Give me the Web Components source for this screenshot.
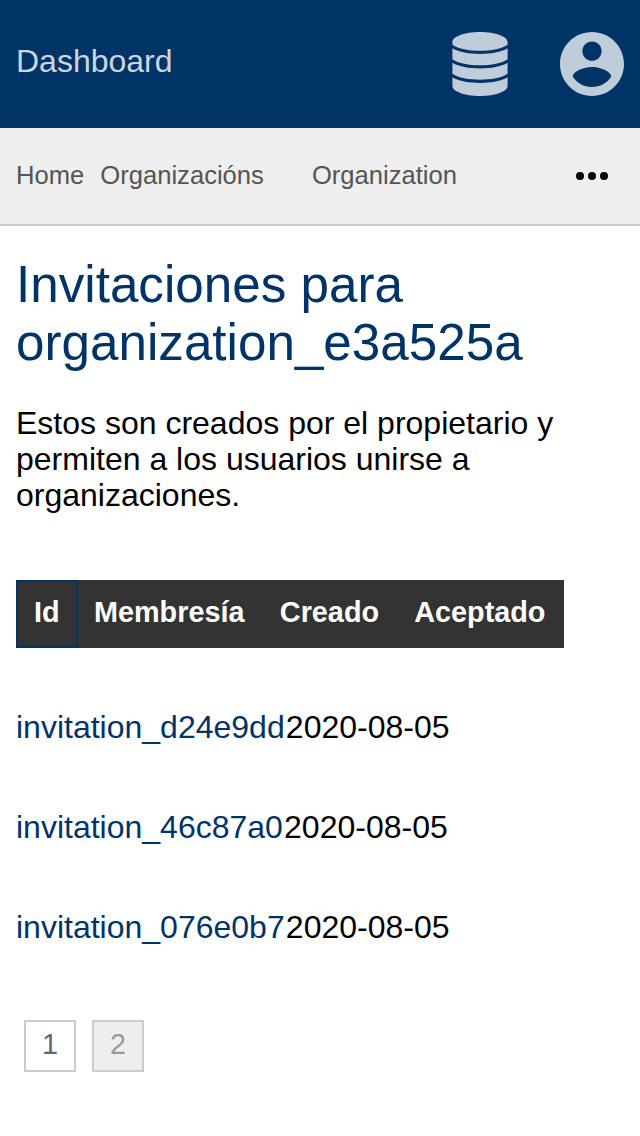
<!DOCTYPE html>
<html lang="es">
<head>
<meta charset="utf-8">
<title>Invitaciones</title>
<style>
body { margin: 0; background: #fff; color: #000; font: 32px/36px "Liberation Sans", Arial, sans-serif; }
</style>
</head>
<body>
<invite-page></invite-page>
<script>
const define = (name, html) => {
  const t = document.createElement('template');
  t.innerHTML = html;
  customElements.define(name, class extends HTMLElement {
    constructor() {
      super();
      this.attachShadow({ mode: 'open' }).append(t.content.cloneNode(true));
    }
  });
};

define('app-header', `
<style>
:host { display: flex; box-sizing: border-box; height: 128px; padding: 0 16px; background: #036; align-items: flex-start; justify-content: space-between; }
.title { margin-top: 43px; color: #ccd6e0; }
nav { display: flex; gap: 52px; margin-top: 32px; }
svg { display: block; height: 64px; fill: #bfccd9; }
.db { width: 56px; }
.user { width: 64px; }
</style>
<span class="title"><slot></slot></span>
<nav>
<svg class="db" viewBox="0 0 56 64"><path d="M.4 10C.4 4.500 12.500 0 28 0S55.600 4.500 55.600 10V12.800C49.500 17 39.500 18.800 28 18.800S6.500 17 .4 12.800zM.4 16.300C7 20.300 17 22 28 22S49 20.300 55.600 16.300V27.300C49.500 31.500 39.500 33.300 28 33.300S6.500 31.500 .4 27.300zM.4 30.800C7 34.800 17 36.500 28 36.500S49 34.800 55.600 30.800V41.800C49.500 46 39.500 47.700 28 47.700S6.500 46 .4 41.800zM.4 45.200C7 49.200 17 50.900 28 50.900S49 49.200 55.600 45.200V54C55.600 59.500 43.500 64 28 64S.4 59.500 .4 54z"/></svg>
<svg class="user" viewBox="2 2 20 20"><path d="M12 2C6.48 2 2 6.48 2 12s4.48 10 10 10 10-4.48 10-10S17.52 2 12 2zm0 3c1.66 0 3 1.34 3 3s-1.34 3-3 3-3-1.34-3-3 1.34-3 3-3zm0 14.2c-2.5 0-4.71-1.28-6-3.22.03-1.99 4-3.08 6-3.08 1.99 0 5.97 1.09 6 3.08-1.29 1.94-3.5 3.22-6 3.22z"/></svg>
</nav>`);

define('bread-crumbs', `
<style>
:host { display: flex; box-sizing: border-box; height: 98px; padding: 0 32px 2px 16px; background: #eee; border-bottom: 2px solid #ccc; align-items: center; font-size: 25.6px; line-height: 30px; color: #555; }
.links { display: flex; flex: 1; }
svg { width: 32px; height: 8px; margin-top: 2px; }
</style>
<div class="links"><slot></slot></div>
<svg viewBox="0 0 32 8"><circle cx="4" cy="4" r="4"/><circle cx="16" cy="4" r="4"/><circle cx="28" cy="4" r="4"/></svg>`);

define('bread-item', `
<style>:host { display: block; margin-right: 16px; } :host([wide]) { margin-right: 48px; }</style><slot></slot>`);

define('head-cell', `
<style>
:host { display: block; box-sizing: border-box; height: 68px; padding: 14px 15.2px 14px 16px; border: 2px solid transparent; font-size: 28.8px; line-height: 33px; font-weight: bold; color: #fff; }
:host([active]) { width: 62px; border-color: #036; }
:host([first]) { border-left: 0; padding-left: 16px; padding-right: 15.4px; }
</style><slot></slot>`);

define('table-head', `
<style>:host { display: flex; box-sizing: border-box; width: 548px; height: 68px; margin-top: 67px; background: #333; }</style><slot></slot>`);

define('invite-row', `
<style>:host { display: flex; gap: 1.2px; height: 36px; margin-bottom: 64px; } .link { color: #036; }</style>
<span class="link"><slot name="id"></slot></span><span><slot></slot></span>`);

define('page-button', `
<style>
:host { display: block; box-sizing: border-box; width: 52px; height: 52px; padding-top: 6px; border: 2px solid #ccc; text-align: center; font-size: 28.8px; line-height: 33px; color: #666; }
:host([current]) { background: #eee; color: #999; }
</style><slot></slot>`);

define('invite-page', `
<style>
:host { display: block; }
main { padding: 30px 16px 0; }
h1 { margin: 0; font-size: 51.2px; line-height: 58px; font-weight: normal; color: #036; }
p { margin: 33px 0 0; }
.rows { padding-top: 61px; }
.pages { display: flex; gap: 16px; padding: 11px 8px 0; }
</style>
<app-header>Dashboard</app-header>
<bread-crumbs><bread-item>Home</bread-item><bread-item wide>Organizacións</bread-item><bread-item>Organization</bread-item></bread-crumbs>
<main>
<h1>Invitaciones para organization_e3a525a</h1>
<p>Estos son creados por el propietario y permiten a los usuarios unirse a organizaciones.</p>
<table-head><head-cell active>Id</head-cell><head-cell first>Membresía</head-cell><head-cell>Creado</head-cell><head-cell>Aceptado</head-cell></table-head>
<div class="rows">
<invite-row><span slot="id">invitation_d24e9dd</span>2020-08-05</invite-row>
<invite-row><span slot="id">invitation_46c87a0</span>2020-08-05</invite-row>
<invite-row><span slot="id">invitation_076e0b7</span>2020-08-05</invite-row>
</div>
<div class="pages"><page-button>1</page-button><page-button current>2</page-button></div>
</main>`);
</script>
</body>
</html>
